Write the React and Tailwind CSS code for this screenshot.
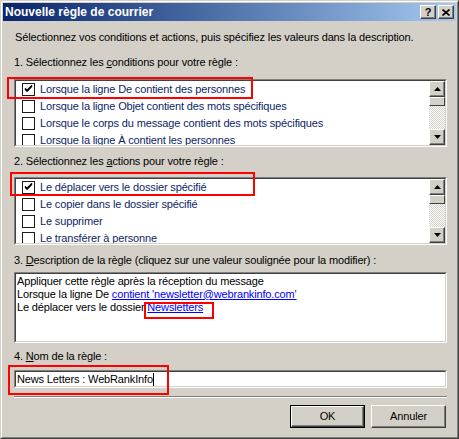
import React from "react";

const font = { fontFamily: '"Liberation Sans", Arial, sans-serif' };

function Check({ checked }) {
  return (
    <span className="w-[13px] h-[13px] border border-[#1c1c1c] bg-white flex items-center justify-center shrink-0">
      {checked && (
        <svg width="9" height="9" viewBox="0 0 9 9">
          <path d="M1 3.5L3 5.5L8 0.5" stroke="#000" strokeWidth="1.6" fill="none" />
          <path d="M1 3v2l2 2 5-5V0L3 5z" fill="#000" />
        </svg>
      )}
    </span>
  );
}

function Arrow({ up }) {
  return (
    <span className="w-[16px] h-[16px] bg-[#d4d0c8] border border-t-white border-l-white border-r-[#404040] border-b-[#404040] shadow-[inset_-1px_-1px_0_#808080] flex items-center justify-center shrink-0">
      <svg width="7" height="4" viewBox="0 0 7 4">
        {up ? <path d="M3.5 0L7 4H0z" fill="#000" /> : <path d="M0 0h7L3.5 4z" fill="#000" />}
      </svg>
    </span>
  );
}

function Scrollbar() {
  return (
    <div className="w-[16px] flex flex-col shrink-0">
      <Arrow up />
      <span className="w-[16px] h-[9px] bg-[#d4d0c8] border border-t-white border-l-white border-r-[#404040] border-b-[#404040] shrink-0" />
      <div className="flex-1 bg-[repeating-conic-gradient(#d4d0c8_0_25%,#ffffff_0_50%)] bg-[length:2px_2px]" />
      <Arrow />
    </div>
  );
}

function ListBox({ items }) {
  return (
    <div className="h-[68px] border border-t-[#808080] border-l-[#808080] border-b-white border-r-white">
      <div className="h-full border border-t-[#404040] border-l-[#404040] border-b-[#d4d0c8] border-r-[#d4d0c8] bg-white flex">
        <div className="flex-1 overflow-hidden">
          {items.map((it, i) => (
            <div key={i} className="h-[17px] flex items-center pl-[6px] gap-[5px] text-[#0b1f66] whitespace-nowrap">
              <Check checked={it.checked} />
              <span>{it.label}</span>
            </div>
          ))}
        </div>
        <Scrollbar />
      </div>
    </div>
  );
}

function Sunken({ className, children }) {
  return (
    <div className={"border border-t-[#808080] border-l-[#808080] border-b-white border-r-white " + className}>
      <div className="h-full border border-t-[#404040] border-l-[#404040] border-b-[#d4d0c8] border-r-[#d4d0c8] bg-white">
        {children}
      </div>
    </div>
  );
}

function Button({ children, isDefault }) {
  const inner = (
    <div className="w-full h-full bg-[#d4d0c8] border border-t-white border-l-white border-r-[#404040] border-b-[#404040] shadow-[inset_-1px_-1px_0_#808080] flex items-center justify-center text-black">
      {children}
    </div>
  );
  return isDefault ? (
    <div className="w-[75px] h-[23px] border border-black">{inner}</div>
  ) : (
    <div className="w-[75px] h-[23px]">{inner}</div>
  );
}

export default function App() {
  return (
    <div style={font} className="relative w-[459px] h-[439px] text-[11px] leading-[13px] tracking-[-0.15px] text-black bg-[#d4d0c8] border border-t-[#d4d0c8] border-l-[#d4d0c8] border-b-[#404040] border-r-[#404040]">
      <div className="h-full border border-t-white border-l-white border-b-[#808080] border-r-[#808080] p-px">
        {/* Title bar */}
        <div className="h-[18px] bg-gradient-to-r from-[#0a246a] to-[#a6caf0] flex items-center pl-[2px] pr-[2px]">
          <span className="flex-1 text-white font-bold text-[12px] tracking-normal">Nouvelle règle de courrier</span>
          <div className="flex gap-[2px]">
            <span className="w-[16px] h-[14px] bg-[#d4d0c8] border border-t-white border-l-white border-r-[#404040] border-b-[#404040] shadow-[inset_-1px_-1px_0_#808080] flex items-center justify-center font-bold text-[11px] leading-none">?</span>
            <span className="w-[16px] h-[14px] bg-[#d4d0c8] border border-t-white border-l-white border-r-[#404040] border-b-[#404040] shadow-[inset_-1px_-1px_0_#808080] flex items-center justify-center">
              <svg width="8" height="7" viewBox="0 0 8 7">
                <path d="M0.5 0.5L7.5 6.5M7.5 0.5L0.5 6.5" stroke="#000" strokeWidth="1.6" />
              </svg>
            </span>
          </div>
        </div>

        {/* Body */}
        <div className="pl-[11px] pr-[9px]">
          <div className="mt-[10px] h-[13px] pl-px">Sélectionnez vos conditions et actions, puis spécifiez les valeurs dans la description.</div>
          <div className="mt-[12px] h-[13px]">1. Sélectionnez les <u>c</u>onditions pour votre règle :</div>
          <div className="mt-[10px]">
            <ListBox
              items={[
                { checked: true, label: "Lorsque la ligne De contient des personnes" },
                { label: "Lorsque la ligne Objet contient des mots spécifiques" },
                { label: "Lorsque le corps du message contient des mots spécifiques" },
                { label: "Lorsque la ligne À contient les personnes" },
              ]}
            />
          </div>
          <div className="mt-[8px] h-[13px]">2. Sélectionnez les <u>a</u>ctions pour votre règle :</div>
          <div className="mt-[9px]">
            <ListBox
              items={[
                { checked: true, label: "Le déplacer vers le dossier spécifié" },
                { label: "Le copier dans le dossier spécifié" },
                { label: "Le supprimer" },
                { label: "Le transférer à personne" },
              ]}
            />
          </div>
          <div className="mt-[9px] h-[13px]">3. <u>D</u>escription de la règle (cliquez sur une valeur soulignée pour la modifier) :</div>
          <Sunken className="mt-[5px] h-[71px]">
            <div className="pt-[1px] pl-px">
              <div>Appliquer cette règle après la réception du message</div>
              <div>
                Lorsque la ligne De <span className="text-[#0000ff] underline">contient 'newsletter@webrankinfo.com'</span>
              </div>
              <div>
                Le déplacer vers le dossier <span className="text-[#0000ff] underline">Newsletters</span>
              </div>
            </div>
          </Sunken>
          <div className="mt-[7px] h-[13px]">4. <u>N</u>om de la règle :</div>
          <Sunken className="mt-[7px] h-[18px]">
            <div className="h-full flex items-center pl-px">
              <span>News Letters : WebRankInfo</span>
              <span className="w-px h-[13px] bg-black" />
            </div>
          </Sunken>
          <div className="mt-[8px] h-[2px] border-t border-t-[#808080] border-b border-b-white" />
          <div className="mt-[7px] flex justify-end gap-[6px] pr-px">
            <Button isDefault>OK</Button>
            <Button>Annuler</Button>
          </div>
        </div>
      </div>

      {/* Red highlight overlays */}
      <div className="absolute left-[6px] top-[76px] w-[246px] h-[22px] border-2 border-[#ff0000]" />
      <div className="absolute left-[9px] top-[171px] w-[245px] h-[24px] border-2 border-[#ff0000]" />
      <div className="absolute left-[143px] top-[301px] w-[70px] h-[17px] border-2 border-[#ff0000]" />
      <div className="absolute left-[7px] top-[364px] w-[161px] h-[30px] border-2 border-[#ff0000]" />
    </div>
  );
}
